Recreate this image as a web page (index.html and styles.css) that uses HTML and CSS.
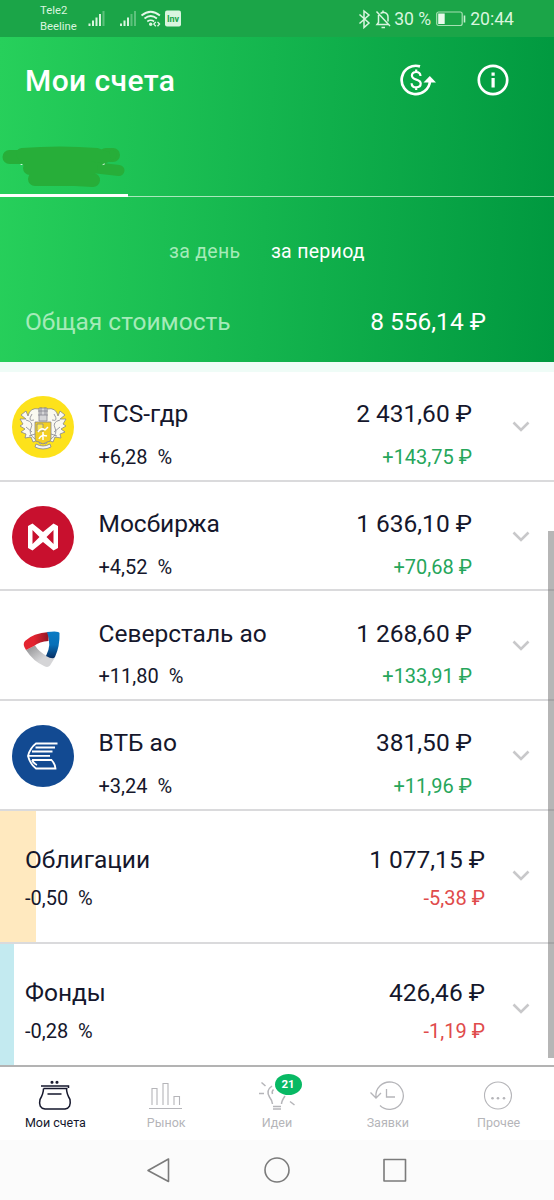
FILE: index.html
```html
<!DOCTYPE html>
<html lang="ru">
<head>
    <meta charset="UTF-8">
    <meta name="viewport" content="width=device-width, initial-scale=1.0">
    <title>Мои счета</title>
    <link rel="stylesheet" href="styles.css">
</head>
<body>
    <!-- Status bar -->
    <div class="status">
        <div class="carriers"><span>Tele2</span><span>Beeline</span></div>
        <svg class="status-left" width="100" height="37" viewBox="0 0 100 37">
            <g fill="#d9f5df">
                <path d="M8.500 23.500h2v2.500h-2zM12 20.500h2v5.500h-2zM15.500 17.500h2v8.500h-2zM19 14h2v12h-2z"/>
                <path d="M22.500 11h2v15h-2z" opacity=".35"/>
                <path d="M40 23.500h2v2.500h-2zM43.500 20.500h2v5.500h-2zM47 17.500h2v8.500h-2z"/>
                <path d="M50.500 14h2v12h-2zM54 11h2v15h-2z" opacity=".35"/>
                <circle cx="70.700" cy="24.300" r="1.700"/>
                <rect x="85" y="10.500" width="16" height="16" rx="2"/>
            </g>
            <g fill="none" stroke="#e3f8e8" stroke-width="1.700">
                <path d="M61.500 15.500q9.200-7.500 18.400 0M64.500 18.500q6.200-5 12.400 0M67.300 21.500q3.400-2.500 6.800 0"/>
                <path d="M75.800 21.900l-2 2.200 2 2.200M77.500 21.900l2 2.200-2 2.200" stroke-width="1.300"/>
            </g>
            <text x="93" y="21.500" text-anchor="middle" class="inv">Inv</text>
        </svg>
        <svg class="status-icons" width="36" height="24" viewBox="0 0 36 24" fill="none" stroke="#d9f5df" stroke-width="1.500">
            <path d="M1.500 7.500l9.500 8.500-5 4.500V4l5 4-9.500 8.500"/>
            <path d="M18.500 4.500l13.500 14.500M20.500 8v7.500l-1.500 2h11M22.500 6.500q2-1.500 4-1 3.500 1 3.500 4.500v4.500M25 5V3.500M23.500 20.500h3.500"/>
        </svg>
        <span class="percent">30 %</span>
        <svg class="battery" width="31" height="16" viewBox="0 0 31 16">
            <rect x=".700" y="1" width="25.500" height="13.500" rx="2" fill="none" stroke="#a5e0b2" stroke-width="1.200"/>
            <rect x="2.200" y="2.500" width="6.500" height="10.500" fill="#e9faec"/>
            <path d="M28.500 4.500v7" stroke="#c9efd1" stroke-width="1.600"/>
        </svg>
        <span class="clock">20:44</span>
    </div>

    <!-- Header -->
    <div class="header">
        <div class="title-row">
            <h1>Мои счета</h1>
            <svg class="currency" width="36" height="32" viewBox="0 0 36 32">
                <path d="M20 2.400A14.200 14.200 0 1 0 30 17" fill="none" stroke="#fff" stroke-width="2.700"/>
                <path d="M23.500 18.500l6.300-6.500 6.200 6.500z" fill="#fff"/>
                <path d="M20.500 12c-.2-2.500-1.800-4-4.300-4-2.600 0-4.300 1.400-4.300 3.600 0 5.300 8.800 2.800 8.800 8 0 2.300-1.800 3.800-4.500 3.800-2.800 0-4.500-1.500-4.600-4.200M16.200 5.500V8M16.200 23.500V26" fill="none" stroke="#fff" stroke-width="2.200"/>
            </svg>
            <svg width="32" height="32" viewBox="0 0 32 32">
                <circle cx="16" cy="16" r="14.200" fill="none" stroke="#fff" stroke-width="2.700"/>
                <path d="M14.500 8.500h3.200v3.200h-3.200zM14.500 14h3.200v9.500h-3.200z" fill="#fff"/>
            </svg>
        </div>
        <div class="tabs">
            <div class="tab">
                <svg width="128" height="57" viewBox="0 0 128 57" fill="none" stroke="#27ae39" stroke-linecap="round" stroke-linejoin="round">
                    <path d="M9.500 20H20M106 18h7" stroke-width="14"/>
                    <path d="M112 18l-2 1" stroke-width="9"/>
                    <path d="M22 17q38-3 75 0l8 3-13 7H30z" stroke-width="12" fill="#27ae39"/>
                    <path d="M88 30l31 3.500" stroke-width="11"/>
                    <path d="M35 42h40l18 1" stroke-width="14"/>
                    <path d="M30 31h61" stroke-width="14"/>
                    <path d="M21 27.500h1M103 27.500l1.500-.5" stroke="#d5f5dc" stroke-width="1"/>
                </svg>
            </div>
        </div>
        <div class="periods">
            <span>за день</span>
            <span class="selected">за период</span>
        </div>
        <div class="total">
            <span>Общая стоимость</span>
            <span class="sum">8 556,14 ₽</span>
        </div>
    </div>

    <!-- Portfolio -->
    <div class="list">
        <div class="row">
            <svg class="logo" viewBox="0 0 62 62">
                <circle cx="31" cy="31" r="31" fill="#fde21b"/>
                <g stroke="#85858f" stroke-width=".8" stroke-linejoin="round">
                    <path d="M27 13q-9-2-11 7l-2-5-5 4 5 4-6 0 3 5-3 2 5 3-4 3 5 2-1 4 6-1 2 5 5-2 2 4 3-1 3 1 2-4 5 2 2-5 6 1-1-4 5-2-4-3 5-3-3-2 3-5-6 0 5-4-5-4-2 5q-2-9-11-7z" fill="#faf9f0"/>
                    <path d="M14 24q8 2 5 8t4 11M48 24q-8 2-5 8t-4 11M20 18q-5 8 2 6M42 18q5 8-2 6M14 31l6 5M48 31l-6 5M17 40l6-2M45 40l-6-2" fill="none"/>
                    <path d="M27 12h8v13h-8z" fill="#d6d6d8"/>
                    <path d="M26 15h10M26 19h10M29 11v8M33 11v8" fill="none"/>
                    <path d="M23 26h16v17q0 3-4 3l-4 2-4-2q-4 0-4-3z" fill="#f3cf22"/>
                    <path d="M25 28h6v7h-6z" fill="#ffea50"/>
                    <path d="M26 36q3-5 7-2l3-3M27 43q2-5 8-3M31 36v8" fill="none" stroke="#fff" stroke-width="1.500"/>
                    <path d="M24 48q7 4 14 0l1 3q-8 4-16 0z" fill="#f5f5f5"/>
                </g>
            </svg>
            <div class="asset"><div class="name">TCS-гдр</div><div class="change">+6,28&nbsp; %</div></div>
            <div class="value"><div class="name">2 431,60 ₽</div><div class="change up">+143,75 ₽</div></div>
            <svg class="chevron" viewBox="0 0 18 12"><path d="M1.500 1.500L9 9l7.500-7.500"/></svg>
        </div>
        <div class="row">
            <svg class="logo" viewBox="0 0 62 62">
                <circle cx="31" cy="31" r="31" fill="#c8102e"/>
                <path d="M16 20l4.500-2.500L31 26l10.500-8.500L46 20v22l-4.500 2.500L31 36l-10.500 8.500L16 42zM20.500 24v14l7-7zM41.500 24v14l-7-7z" fill="#fff" fill-rule="evenodd"/>
            </svg>
            <div class="asset"><div class="name">Мосбиржа</div><div class="change">+4,52&nbsp; %</div></div>
            <div class="value"><div class="name">1 636,10 ₽</div><div class="change up">+70,68 ₽</div></div>
            <svg class="chevron" viewBox="0 0 18 12"><path d="M1.500 1.500L9 9l7.500-7.500"/></svg>
        </div>
        <div class="row">
            <svg class="logo" viewBox="0 0 62 62">
                <defs>
                    <linearGradient id="red" x2="1"><stop offset=".4" stop-color="#e32430"/><stop offset="1" stop-color="#8e1424"/></linearGradient>
                    <linearGradient id="blue" x2="0" y2="1"><stop stop-color="#0a7bc4"/><stop offset=".5" stop-color="#0870b8"/><stop offset="1" stop-color="#082f63"/></linearGradient>
                    <linearGradient id="grey" x2="1" y2="1"><stop stop-color="#8c8c8e"/><stop offset=".6" stop-color="#d5d5d7"/></linearGradient>
                </defs>
                <path d="M14 34q7 11 18 16 4 2 6-.500l5-8q-4 1-8-1.500-8-4-12-10.500z" fill="url(#grey)"/>
                <path d="M14 34q-4-6-1-9 8-8 24-9l-.5 9q-9 .5-14.500 5z" fill="url(#red)"/>
                <path d="M35 16q12-1.500 12.500 1 .5 13-4.500 24-2 3-9-1 6-11 1-24z" fill="url(#blue)"/>
            </svg>
            <div class="asset"><div class="name">Северсталь ао</div><div class="change">+11,80&nbsp; %</div></div>
            <div class="value"><div class="name">1 268,60 ₽</div><div class="change up">+133,91 ₽</div></div>
            <svg class="chevron" viewBox="0 0 18 12"><path d="M1.500 1.500L9 9l7.500-7.500"/></svg>
        </div>
        <div class="row">
            <svg class="logo" viewBox="0 0 62 62">
                <circle cx="31" cy="31" r="31" fill="#124a92"/>
                <g fill="none" stroke="#fff" stroke-width="1.800">
                    <path d="M45.500 18.500H24q-6 4.500-8 12.500 2 8 8 12.500h19.500q0-4-4-8.500H20"/>
                    <path d="M43 22.500H23.500M40.500 26.500H20M16.500 30.800H38"/>
                    <path d="M20 35q2 4 5 5"/>
                </g>
            </svg>
            <div class="asset"><div class="name">ВТБ ао</div><div class="change">+3,24&nbsp; %</div></div>
            <div class="value"><div class="name">381,50 ₽</div><div class="change up">+11,96 ₽</div></div>
            <svg class="chevron" viewBox="0 0 18 12"><path d="M1.500 1.500L9 9l7.500-7.500"/></svg>
        </div>
        <div class="row group bonds">
            <div class="asset"><div class="name">Облигации</div><div class="change">-0,50&nbsp; %</div></div>
            <div class="value"><div class="name">1 077,15 ₽</div><div class="change down">-5,38 ₽</div></div>
            <svg class="chevron" viewBox="0 0 18 12"><path d="M1.500 1.500L9 9l7.500-7.500"/></svg>
        </div>
        <div class="row group funds">
            <div class="asset"><div class="name">Фонды</div><div class="change">-0,28&nbsp; %</div></div>
            <div class="value"><div class="name">426,46 ₽</div><div class="change down">-1,19 ₽</div></div>
            <svg class="chevron" viewBox="0 0 18 12"><path d="M1.500 1.500L9 9l7.500-7.500"/></svg>
        </div>
        <div class="scrollbar"></div>
    </div>

    <!-- Bottom navigation -->
    <div class="nav">
        <div class="nav-item active">
            <svg viewBox="0 0 40 34">
                <path d="M6 6h27.500v2M8.500 8.500h24M8.500 8.500q0 5-3.500 11-2 8.500 5 9.500h20q6.500-1 5-9.500-3.500-6-3.500-11M12.500 14h14" stroke-width="1.500"/>
                <circle cx="17" cy="2.300" r="1" fill="currentColor"/><circle cx="22" cy="2.300" r="1" fill="currentColor"/>
            </svg>
            <span>Мои счета</span>
        </div>
        <div class="nav-item">
            <svg viewBox="0 0 40 34"><path d="M3 28.500h33M6 25V8.500h5V25M17 25V3.500h5V25M28 25v-8.500h5.500V25"/></svg>
            <span>Рынок</span>
        </div>
        <div class="nav-item">
            <svg viewBox="0 0 40 34"><path d="M4.500 2.500l4 3.500M2 13.500h5M33 21.500l4.500 3.500M16 26.500h8M16 29h8M15.500 24q0-3-3-7-4-6.500 2.500-11M24.500 24q0-3 3.500-8M16.500 9.500q-2 2-1 4.500" stroke-width="1.500"/></svg>
            <span>Идеи</span>
            <b class="badge">21</b>
        </div>
        <div class="nav-item">
            <svg viewBox="0 0 40 34"><path d="M8 17.500A13.700 13.700 0 1 1 12 25.500M2.500 12.500L8 18l5-5M18.500 9v8H27" stroke-width="1.300"/></svg>
            <span>Заявки</span>
        </div>
        <div class="nav-item">
            <svg viewBox="0 0 40 34"><circle cx="19" cy="15.500" r="13.500"/><g fill="currentColor" stroke="none"><circle cx="13.500" cy="18.300" r="1.300"/><circle cx="19" cy="18.300" r="1.300"/><circle cx="25" cy="18.300" r="1.300"/></g></svg>
            <span>Прочее</span>
        </div>
    </div>

    <!-- System buttons -->
    <div class="system">
        <svg viewBox="0 0 26 26"><path d="M22.500 2v22.500L2 13.500z"/></svg>
        <svg viewBox="0 0 26 26"><circle cx="13" cy="13" r="12"/></svg>
        <svg viewBox="0 0 26 26"><path d="M2 2.500h21.500V24H2z"/></svg>
    </div>
</body>
</html>
```
FILE: styles.css
```css
* {
    box-sizing: border-box;
}
body {
    margin: 0;
    width: 554px;
    height: 1200px;
    overflow: hidden;
    font-family: Roboto, sans-serif;
    color: #15172c;
    background-color: #fff;
}
svg {
    display: block;
    flex-shrink: 0;
}
.status {
    display: flex;
    align-items: center;
    height: 37px;
    padding: 0 40px;
    background-color: #1ba548;
    color: #d9f5df;
}
.carriers {
    display: flex;
    flex-direction: column;
    width: 40px;
    flex-shrink: 0;
    font-size: 11.3px;
    line-height: 16px;
    padding-top: 1px;
}
.status-left {
    overflow: visible;
}
.inv {
    font-size: 9px;
    font-weight: bold;
    fill: #1ba548;
}
.status-icons {
    margin-left: auto;
}
.percent {
    font-size: 17.6px;
    white-space: nowrap;
}
.battery {
    margin: 0 3px 0 5px;
}
.clock {
    font-size: 17.6px;
}
.header {
    height: 325px;
    background: linear-gradient(93deg, #27d05b 0%, #14b54e 48%, #00983f 100%);
    color: #fff;
}
.title-row {
    display: flex;
    align-items: center;
    height: 86px;
    padding: 0 45px 0 25px;
}
h1 {
    margin: 0 auto 0 0;
    font-size: 30px;
    font-weight: 500;
    letter-spacing: 0.4px;
}
.currency {
    margin-right: 41px;
}
.tabs {
    height: 74px;
    border-bottom: 1px solid #a9e8bd;
}
.tab {
    width: 128px;
    height: 74px;
    padding-top: 14px;
    border-bottom: 3px solid #fff;
}
.periods {
    display: flex;
    gap: 30.5px;
    padding: 43px 0 0 169px;
    font-size: 19.5px;
    line-height: 24px;
    letter-spacing: 0.3px;
    color: #a5ebb9;
}
.periods .selected {
    color: #fff;
}
.total {
    display: flex;
    justify-content: space-between;
    padding: 43px 68px 0 25px;
    font-size: 24.5px;
    line-height: 30px;
    color: #a5ebb9;
}
.total .sum {
    color: #fff;
}
.list {
    position: relative;
    height: 703px;
    border-top: 10px solid #effcf7;
}
.row {
    display: flex;
    height: 109.7px;
    padding: 27.4px 24px 0 12px;
    border-bottom: 2px solid #dadadc;
}
.logo {
    width: 62px;
    height: 62px;
    margin: -3px 24.5px 0 0;
}
.asset {
    flex: 1;
}
.name {
    font-size: 24.5px;
    line-height: 30px;
    white-space: nowrap;
}
.change {
    margin-top: 15.5px;
    font-size: 20px;
    line-height: 24px;
    white-space: nowrap;
}
.value {
    text-align: right;
}
.up {
    color: #26a65b;
}
.down {
    color: #df4b4b;
}
.chevron {
    width: 18px;
    height: 12px;
    margin: 21.5px 0 0 40px;
    fill: none;
    stroke: #c8c8ca;
    stroke-width: 2.6;
}
.group {
    height: 133px;
    padding: 34px 24px 0 25px;
}
.group .change {
    margin-top: 11.5px;
}
.group .chevron {
    margin: 25px 0 0 27px;
}
.bonds {
    background: linear-gradient(#ffe9bf, #ffe9bf) no-repeat 0 0 / 36px 100%;
}
.funds {
    height: 121.2px;
    border-bottom: none;
    background: linear-gradient(#c3eaf0, #c3eaf0) no-repeat 0 0 / 14px 100%;
}
.scrollbar {
    position: absolute;
    right: 0;
    top: 159px;
    width: 6px;
    height: 527px;
    background-color: rgba(110, 110, 110, 0.5);
}
.nav {
    display: flex;
    height: 75px;
    border-top: 2px solid #b3b3b3;
}
.nav-item {
    position: relative;
    flex: 1;
    display: flex;
    flex-direction: column;
    align-items: center;
    padding-top: 13px;
    color: #b5b5b9;
    font-size: 12.5px;
    line-height: 18px;
}
.nav-item svg {
    width: 40px;
    height: 34px;
    fill: none;
    stroke: currentColor;
    stroke-width: 1.1;
}
.nav-item.active {
    color: #15172c;
}
.badge {
    position: absolute;
    left: 53px;
    top: 7px;
    width: 27px;
    height: 21px;
    border-radius: 50%;
    background-color: #08b964;
    color: #fff;
    font-size: 11.5px;
    line-height: 21px;
    text-align: center;
}
.system {
    display: flex;
    justify-content: center;
    align-items: center;
    gap: 92px;
    height: 60px;
    background-color: #fbfbfb;
}
.system svg {
    width: 26px;
    height: 26px;
    fill: none;
    stroke: #7b7b7b;
    stroke-width: 1.6;
    stroke-linejoin: round;
}
```
